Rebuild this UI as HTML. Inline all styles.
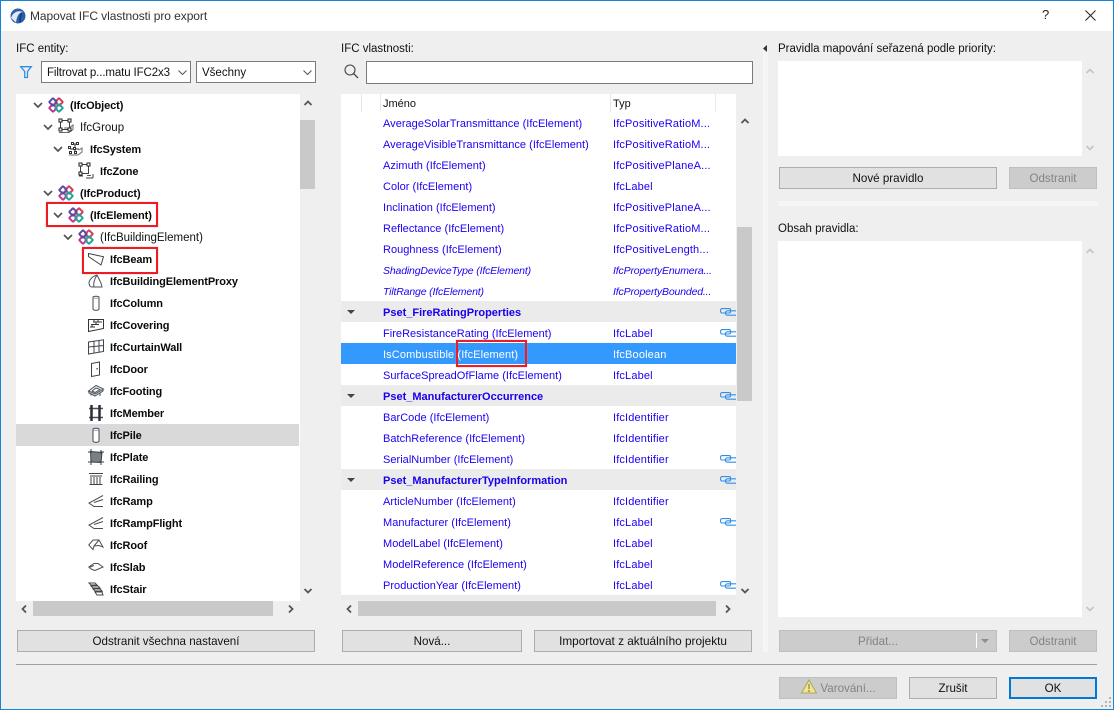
<!DOCTYPE html>
<html><head><meta charset="utf-8"><title>Mapovat IFC vlastnosti pro export</title>
<style>
html,body{margin:0;padding:0}
body{width:1114px;height:710px;overflow:hidden;position:relative;background:#efefef;font:12px/20px "Liberation Sans",sans-serif;color:#111}
div{position:absolute;box-sizing:border-box}
.t{white-space:nowrap;height:20px;margin-top:1px}
.b{font-weight:bold;font-size:11px;color:#0a0a0a;letter-spacing:-.1px}
.r{font-size:11.5px;color:#111}
.l{color:#1c00f4;font-size:11px;white-space:nowrap;height:20px;left:383px;margin-top:1px;letter-spacing:.03px}
.y{color:#1c00f4;font-size:11px;white-space:nowrap;height:20px;left:613px;margin-top:1px;letter-spacing:.15px}
.g{font-weight:bold;font-size:11px;left:383px;color:#1800ee;white-space:nowrap;height:20px;margin-top:1px}
.l.i,.y.i{font-style:italic;font-size:10.5px;letter-spacing:-.16px}
.grp{left:341px;width:395px;height:21px;background:#ebebeb}
.btn{background:#e1e1e1;border:1px solid #adadad;text-align:center;height:22px;line-height:21px;font-size:11.6px;color:#111}
.dis{background:#ccc;border:1px solid #bfbfbf;color:#838383}
.wh{background:#fff}
.th{background:#c9c9c9}
.red{border:2px solid #ee1c25;box-shadow:0 0 1px #f88}
svg{position:absolute;overflow:visible}
</style></head><body>
<svg width="0" height="0" style="position:absolute"><defs>
<symbol id="ifc" viewBox="0 0 16 16" overflow="visible"><g fill="none" stroke-width="2"><rect x="2.250" y="8.250" width="5.500" height="5.500" rx=".8" transform="rotate(45 5 11)" stroke="#c2368f"/><rect x="8.250" y="2.250" width="5.500" height="5.500" rx=".8" transform="rotate(45 11 5)" stroke="#d93a55"/><rect x="2.250" y="2.250" width="5.500" height="5.500" rx=".8" transform="rotate(45 5 5)" stroke="#5a4aa6"/><rect x="8.250" y="8.250" width="5.500" height="5.500" rx=".8" transform="rotate(45 11 11)" stroke="#1fa59a"/></g></symbol>
<symbol id="chev" viewBox="0 0 10 6" overflow="visible"><path d="M1 1l4 4 4-4" fill="none" stroke="#555" stroke-width="1.700"/></symbol>
<symbol id="up" viewBox="0 0 10 6" overflow="visible"><path d="M1.500 5L5 1.500 8.500 5" fill="none" stroke="#555" stroke-width="1.800"/></symbol>
<symbol id="dn" viewBox="0 0 10 6" overflow="visible"><path d="M1.500 1L5 4.500 8.500 1" fill="none" stroke="#555" stroke-width="1.800"/></symbol>
<symbol id="ul" viewBox="0 0 10 6" overflow="visible"><path d="M1.500 5L5 1.500 8.500 5" fill="none" stroke="#c6c6c6" stroke-width="1.800"/></symbol>
<symbol id="dl" viewBox="0 0 10 6" overflow="visible"><path d="M1.500 1L5 4.500 8.500 1" fill="none" stroke="#c6c6c6" stroke-width="1.800"/></symbol>
<symbol id="lf" viewBox="0 0 6 10" overflow="visible"><path d="M5 1.500L1.500 5 5 8.500" fill="none" stroke="#555" stroke-width="1.800"/></symbol>
<symbol id="rt" viewBox="0 0 6 10" overflow="visible"><path d="M1 1.500L4.500 5 1 8.500" fill="none" stroke="#555" stroke-width="1.800"/></symbol>
<symbol id="lnk" viewBox="0 0 16 8" overflow="hidden"><g fill="none" stroke="#2f8fe6" stroke-width="1.100"><rect x=".6" y=".6" width="10" height="4.400" rx="1.500"/><path d="M16 2.800H7.500a1.500 1.500 0 0 0 0 4.400H16"/></g></symbol>
<symbol id="col" viewBox="0 0 16 16" overflow="visible"><path d="M5 2.200c0-1.300 6-1.300 6 0v11.600c0 2-6 2-6 0z" fill="#fff" stroke="#445" stroke-width="1"/><path d="M5 2.500c1 1 5 1 6 0" fill="none" stroke="#889" stroke-width=".8"/></symbol>
<symbol id="ramp" viewBox="0 0 16 16" overflow="visible"><path d="M15 2.500L1 10l5 3.500h9M6 9.500l9-3" fill="none" stroke="#4a5058" stroke-width="1"/></symbol>
</defs></svg>

<!-- window frame & title -->
<div class="wh" style="left:0;top:0;width:1114px;height:31px"></div>
<svg style="left:10px;top:8px" width="16" height="16" viewBox="0 0 16 16"><circle cx="8" cy="8" r="7.500" fill="#2d5fa8"/><path d="M1 10C3 4 8 2 13.500 4 9.500 4 7 7 6 14.500" fill="#dfe8f4"/><path d="M12 5c-1.500 1.500-2 5-1.800 9" stroke="#15397a" stroke-width="1.500" fill="none"/></svg>
<div class="t" style="left:30px;top:5px;color:#333;letter-spacing:-.07px">Mapovat IFC vlastnosti pro export</div>
<div class="t" style="left:1042px;top:4px;font-size:13px;color:#222">?</div>
<svg style="left:1085px;top:10px" width="11" height="11"><path d="M.5.500l10 10M10.500.500l-10 10" stroke="#222" stroke-width="1"/></svg>

<!-- left column -->
<div class="t" style="left:16px;top:38px;font-size:11.5px">IFC entity:</div>
<svg style="left:20px;top:66px" width="12" height="12"><path d="M.7.700h10.600L7.500 5.500v6H4.700v-6z" fill="none" stroke="#2f8fe6" stroke-width="1.300"/></svg>
<div class="wh" style="left:41px;top:61px;width:150px;height:22px;border:1px solid #7a7a7a"></div>
<div class="t" style="left:47px;top:62px;font-size:11.5px;letter-spacing:-.12px">Filtrovat p...matu IFC2x3</div>
<svg style="left:178px;top:70px" width="9" height="6"><path d="M.500.500l4 4 4-4" fill="none" stroke="#555" stroke-width="1"/></svg>
<div class="wh" style="left:196px;top:61px;width:120px;height:22px;border:1px solid #7a7a7a"></div>
<div class="t" style="left:202px;top:62px;font-size:11.5px">Všechny</div>
<svg style="left:303px;top:70px" width="9" height="6"><path d="M.500.500l4 4 4-4" fill="none" stroke="#555" stroke-width="1"/></svg>

<div class="wh" style="left:16px;top:94px;width:284px;height:507px"></div>
<div style="left:16px;top:424px;width:283px;height:22px;background:#d9d9d9"></div>
<div class="th" style="left:300px;top:120px;width:15px;height:69px"></div>
<svg style="left:303px;top:100px" width="10" height="6"><use href="#up"/></svg>
<svg style="left:303px;top:588px" width="10" height="6"><use href="#dn"/></svg>
<div class="th" style="left:33px;top:601px;width:240px;height:15px"></div>
<svg style="left:21px;top:604px" width="6" height="10"><use href="#lf"/></svg>
<svg style="left:288px;top:604px" width="6" height="10"><use href="#rt"/></svg>

<!-- tree chevrons -->
<svg style="left:33px;top:102px" width="10" height="6"><use href="#chev"/></svg>
<svg style="left:43px;top:124px" width="10" height="6"><use href="#chev"/></svg>
<svg style="left:53px;top:146px" width="10" height="6"><use href="#chev"/></svg>
<svg style="left:43px;top:190px" width="10" height="6"><use href="#chev"/></svg>
<svg style="left:53px;top:212px" width="10" height="6"><use href="#chev"/></svg>
<svg style="left:63px;top:234px" width="10" height="6"><use href="#chev"/></svg>
<!-- tree icons -->
<svg style="left:48px;top:97px" width="16" height="16"><use href="#ifc"/></svg>
<svg style="left:58px;top:119px" width="16" height="16" viewBox="0 0 16 16"><g fill="none" stroke="#3a4048"><path d="M2.500 1.500h9v9h-9z"/><path d="M1 13.500h10l4-3V6l-4 3H6" stroke="#667"/></g><g fill="#fff" stroke="#222"><rect x="1" y="0" width="3" height="3"/><rect x="10" y="0" width="3" height="3"/><rect x="1" y="9" width="3" height="3"/><rect x="10" y="9" width="3" height="3"/></g></svg>
<svg style="left:68px;top:141px" width="16" height="16" viewBox="0 0 16 16"><g fill="none" stroke="#333"><path d="M4 3h6M7 3v8M2 8h9"/><path d="M1 14h9l4-3V7l-3 2" stroke="#667"/></g><g fill="#fff" stroke="#333"><rect x="3.500" y="1.500" width="2" height="2"/><rect x="8.500" y="1.500" width="2" height="2"/><rect x=".5" y="5.500" width="2" height="2"/><rect x="5.500" y="6.500" width="2" height="2"/><rect x="1.500" y="10.500" width="2" height="2"/><rect x="6.500" y="10.500" width="2" height="2"/></g></svg>
<svg style="left:78px;top:163px" width="16" height="16" viewBox="0 0 16 16"><g fill="none" stroke="#3a4048"><path d="M2.500 1.500h8v9h-8z"/><path d="M1 13h4M8 15h7M15 15v-4"/></g><path d="M9 12h4v1H9z" fill="#555"/><g fill="#fff" stroke="#222"><rect x="1" y="0" width="3" height="3"/><rect x="9" y="0" width="3" height="3"/><rect x="1" y="9" width="3" height="3"/></g></svg>
<svg style="left:58px;top:185px" width="16" height="16"><use href="#ifc"/></svg>
<svg style="left:68px;top:207px" width="16" height="16"><use href="#ifc"/></svg>
<svg style="left:78px;top:229px" width="16" height="16"><use href="#ifc"/></svg>
<svg style="left:88px;top:251px" width="16" height="16" viewBox="0 0 16 16"><path d="M.5 2.500L15.500 5.700 13 14 .5 5.500zM13 14l2.500-8.300" fill="none" stroke="#3f454c"/></svg>
<svg style="left:88px;top:273px" width="16" height="16" viewBox="0 0 16 16"><path d="M1 9C2 6 5 3 9 2L13 10 14 14H4C2 14 1 12 1 9zM9 2c-2 3-4 8-3 12" fill="none" stroke="#4a5058"/></svg>
<svg style="left:88px;top:295px" width="16" height="16"><use href="#col"/></svg>
<svg style="left:88px;top:317px" width="16" height="16" viewBox="0 0 16 16"><path d="M.500 2.500h15v9L.500 14.500z" fill="#fff" stroke="#333"/><path d="M5 5h9M3 7.500h8M2 10h5M6 2.500V5M10 2.500V5M8 5v2.500M4 7.500V10" stroke="#333" fill="none"/></svg>
<svg style="left:88px;top:339px" width="16" height="16" viewBox="0 0 16 16"><path d="M.500 3L15.500.800v11.700L.500 15zM.500 8L15.500 6.500M6 2.200v12M11 1.500v11.500" fill="none" stroke="#3f454c"/></svg>
<svg style="left:88px;top:361px" width="16" height="16" viewBox="0 0 16 16"><path d="M3.500 2.500l8-1.500v13l-8 1.500z" fill="#fff" stroke="#3f454c"/><rect x="8.500" y="7" width="1.200" height="1.500" fill="#333"/></svg>
<svg style="left:88px;top:383px" width="16" height="16" viewBox="0 0 16 16"><path d="M.500 8L8 2.500 15.500 6 7 11zM4 8l4-3 4 1.500-5 3zM.500 8L1 10l6 3 8-5V6M3 10.500v2M12 10v3" fill="none" stroke="#4a5058"/></svg>
<svg style="left:88px;top:405px" width="16" height="16" viewBox="0 0 16 16"><path d="M1 3.500h14M1 12.500h14" stroke="#4a5058" stroke-width="1.500"/><path d="M3.500 0v16M11.500 0v16" stroke="#2a2f35" stroke-width="2.500"/></svg>
<svg style="left:88px;top:427px" width="16" height="16"><use href="#col"/></svg>
<svg style="left:88px;top:449px" width="16" height="16" viewBox="0 0 16 16"><path d="M2.500 2.500L14 3.500 13 13.500 3 13z" fill="#7b7f85" stroke="#3a3f45"/><path d="M3 0v4M0 3h4M13 1v4M12 3h4M3 11v5M0 13h5M13 11v5M11 13h5" stroke="#3a3f45"/></svg>
<svg style="left:88px;top:471px" width="16" height="16" viewBox="0 0 16 16"><path d="M1 2.500h14M2 5h12M3 6v7M6 6v7M9 6v7M12 6v7M1.500 13.500h13" fill="none" stroke="#3f454c"/></svg>
<svg style="left:88px;top:493px" width="16" height="16"><use href="#ramp"/></svg>
<svg style="left:88px;top:515px" width="16" height="16"><use href="#ramp"/></svg>
<svg style="left:88px;top:537px" width="16" height="16" viewBox="0 0 16 16"><path d="M.800 8L5 3h6l4 7-4-1.500L6 9 5 12.500zM6 9l5-6" fill="none" stroke="#4a5058"/></svg>
<svg style="left:88px;top:559px" width="16" height="16" viewBox="0 0 16 16"><path d="M.800 8L6 4.500h4L15 8 7 11.500 4 10.500.800 8zM2 8l4-1.500" fill="none" stroke="#4a5058"/></svg>
<svg style="left:88px;top:581px" width="16" height="16" viewBox="0 0 16 16"><path d="M1 2h6l2 2H3zM3 5h7l2 2H5zM5 8h7l2 2H7zM7 11h7l1 3H9z" fill="#fff" stroke="#444"/></svg>
<!-- tree text -->
<div class="t b" style="left:70px;top:95px">(IfcObject)</div>
<div class="t r" style="left:80px;top:117px">IfcGroup</div>
<div class="t b" style="left:90px;top:139px">IfcSystem</div>
<div class="t b" style="left:100px;top:161px">IfcZone</div>
<div class="t b" style="left:80px;top:183px">(IfcProduct)</div>
<div class="t b" style="left:90px;top:205px">(IfcElement)</div>
<div class="t r" style="left:100px;top:227px">(IfcBuildingElement)</div>
<div class="t b" style="left:110px;top:249px">IfcBeam</div>
<div class="t b" style="left:110px;top:271px">IfcBuildingElementProxy</div>
<div class="t b" style="left:110px;top:293px">IfcColumn</div>
<div class="t b" style="left:110px;top:315px">IfcCovering</div>
<div class="t b" style="left:110px;top:337px">IfcCurtainWall</div>
<div class="t b" style="left:110px;top:359px">IfcDoor</div>
<div class="t b" style="left:110px;top:381px">IfcFooting</div>
<div class="t b" style="left:110px;top:403px">IfcMember</div>
<div class="t b" style="left:110px;top:425px">IfcPile</div>
<div class="t b" style="left:110px;top:447px">IfcPlate</div>
<div class="t b" style="left:110px;top:469px">IfcRailing</div>
<div class="t b" style="left:110px;top:491px">IfcRamp</div>
<div class="t b" style="left:110px;top:513px">IfcRampFlight</div>
<div class="t b" style="left:110px;top:535px">IfcRoof</div>
<div class="t b" style="left:110px;top:557px">IfcSlab</div>
<div class="t b" style="left:110px;top:579px">IfcStair</div>
<div class="red" style="left:46px;top:202px;width:112px;height:25px"></div>
<div class="red" style="left:82px;top:247px;width:76px;height:27px"></div>
<div class="btn" style="left:17px;top:630px;width:298px">Odstranit všechna nastavení</div>

<!-- middle column -->
<div class="t" style="left:341px;top:38px;font-size:11.5px">IFC vlastnosti:</div>
<svg style="left:344px;top:64px" width="15" height="15"><circle cx="6" cy="6" r="5" fill="none" stroke="#444" stroke-width="1.100"/><path d="M9.700 9.700l4.300 4.300" stroke="#444" stroke-width="1.300"/></svg>
<div class="wh" style="left:366px;top:61px;width:387px;height:23px;border:1px solid #7a7a7a"></div>
<div class="wh" style="left:341px;top:94px;width:395px;height:506px"></div>
<div style="left:361px;top:94px;width:1px;height:18px;background:#e8e8e8"></div>
<div style="left:380px;top:94px;width:1px;height:18px;background:#e8e8e8"></div>
<div style="left:610px;top:94px;width:1px;height:18px;background:#e8e8e8"></div>
<div style="left:715px;top:94px;width:1px;height:18px;background:#e8e8e8"></div>
<div class="t" style="left:383px;top:93px;font-size:11px">Jméno</div>
<div class="t" style="left:613px;top:93px;font-size:11px">Typ</div>
<div class="grp" style="top:301px"></div>
<div class="grp" style="top:385px"></div>
<div class="grp" style="top:469px"></div>
<div class="grp" style="top:595px;height:5px"></div>
<div style="left:341px;top:343px;width:395px;height:21px;background:#3399ff"></div>
<svg style="left:347px;top:310px" width="8" height="4"><path d="M0 0h8L4 4z" fill="#444"/></svg>
<svg style="left:347px;top:394px" width="8" height="4"><path d="M0 0h8L4 4z" fill="#444"/></svg>
<svg style="left:347px;top:478px" width="8" height="4"><path d="M0 0h8L4 4z" fill="#444"/></svg>

<div class="l" style="top:113px">AverageSolarTransmittance (IfcElement)</div><div class="y" style="top:113px">IfcPositiveRatioM...</div>
<div class="l" style="top:134px">AverageVisibleTransmittance (IfcElement)</div><div class="y" style="top:134px">IfcPositiveRatioM...</div>
<div class="l" style="top:155px">Azimuth (IfcElement)</div><div class="y" style="top:155px">IfcPositivePlaneA...</div>
<div class="l" style="top:176px">Color (IfcElement)</div><div class="y" style="top:176px">IfcLabel</div>
<div class="l" style="top:197px">Inclination (IfcElement)</div><div class="y" style="top:197px">IfcPositivePlaneA...</div>
<div class="l" style="top:218px">Reflectance (IfcElement)</div><div class="y" style="top:218px">IfcPositiveRatioM...</div>
<div class="l" style="top:239px">Roughness (IfcElement)</div><div class="y" style="top:239px">IfcPositiveLength...</div>
<div class="l i" style="top:260px">ShadingDeviceType (IfcElement)</div><div class="y i" style="top:260px">IfcPropertyEnumera...</div>
<div class="l i" style="top:281px">TiltRange (IfcElement)</div><div class="y i" style="top:281px">IfcPropertyBounded...</div>
<div class="g" style="top:302px">Pset_FireRatingProperties</div>
<div class="l" style="top:323px">FireResistanceRating (IfcElement)</div><div class="y" style="top:323px">IfcLabel</div>
<div class="l" style="top:344px;color:#fff;letter-spacing:.12px">IsCombustible (IfcElement)</div><div class="y" style="top:344px;color:#fff">IfcBoolean</div>
<div class="l" style="top:365px">SurfaceSpreadOfFlame (IfcElement)</div><div class="y" style="top:365px">IfcLabel</div>
<div class="g" style="top:386px">Pset_ManufacturerOccurrence</div>
<div class="l" style="top:407px">BarCode (IfcElement)</div><div class="y" style="top:407px">IfcIdentifier</div>
<div class="l" style="top:428px">BatchReference (IfcElement)</div><div class="y" style="top:428px">IfcIdentifier</div>
<div class="l" style="top:449px">SerialNumber (IfcElement)</div><div class="y" style="top:449px">IfcIdentifier</div>
<div class="g" style="top:470px">Pset_ManufacturerTypeInformation</div>
<div class="l" style="top:491px">ArticleNumber (IfcElement)</div><div class="y" style="top:491px">IfcIdentifier</div>
<div class="l" style="top:512px">Manufacturer (IfcElement)</div><div class="y" style="top:512px">IfcLabel</div>
<div class="l" style="top:533px">ModelLabel (IfcElement)</div><div class="y" style="top:533px">IfcLabel</div>
<div class="l" style="top:554px">ModelReference (IfcElement)</div><div class="y" style="top:554px">IfcLabel</div>
<div class="l" style="top:575px">ProductionYear (IfcElement)</div><div class="y" style="top:575px">IfcLabel</div>
<svg style="left:720px;top:308px" width="16" height="8"><use href="#lnk"/></svg>
<svg style="left:720px;top:329px" width="16" height="8"><use href="#lnk"/></svg>
<svg style="left:720px;top:392px" width="16" height="8"><use href="#lnk"/></svg>
<svg style="left:720px;top:455px" width="16" height="8"><use href="#lnk"/></svg>
<svg style="left:720px;top:476px" width="16" height="8"><use href="#lnk"/></svg>
<svg style="left:720px;top:518px" width="16" height="8"><use href="#lnk"/></svg>
<svg style="left:720px;top:581px" width="16" height="8"><use href="#lnk"/></svg>
<div class="red" style="left:456px;top:340px;width:71px;height:27px"></div>

<div class="th" style="left:737px;top:227px;width:15px;height:174px"></div>
<svg style="left:740px;top:118px" width="10" height="6"><use href="#up"/></svg>
<svg style="left:740px;top:588px" width="10" height="6"><use href="#dn"/></svg>
<div class="th" style="left:358px;top:601px;width:358px;height:15px"></div>
<svg style="left:346px;top:604px" width="6" height="10"><use href="#lf"/></svg>
<svg style="left:725px;top:604px" width="6" height="10"><use href="#rt"/></svg>
<div class="btn" style="left:342px;top:630px;width:180px">Nová...</div>
<div class="btn" style="left:534px;top:630px;width:218px;font-size:11.8px">Importovat z aktuálního projektu</div>

<!-- splitter -->
<div style="left:763px;top:50px;width:5px;height:602px;background:#f5f5f5"></div>
<svg style="left:763px;top:45px" width="4" height="7"><path d="M4 0v7L0 3.500z" fill="#333"/></svg>
<div style="left:778px;top:201px;width:320px;height:5px;background:#f5f5f5"></div>

<!-- right column -->
<div class="t" style="left:778px;top:38px;font-size:11.5px">Pravidla mapování seřazená podle priority:</div>
<div class="wh" style="left:778px;top:61px;width:304px;height:95px"></div>
<svg style="left:1085px;top:68px" width="10" height="6"><use href="#ul"/></svg>
<svg style="left:1085px;top:145px" width="10" height="6"><use href="#dl"/></svg>
<div class="btn" style="left:779px;top:167px;width:218px">Nové pravidlo</div>
<div class="btn dis" style="left:1009px;top:167px;width:88px">Odstranit</div>
<div class="t" style="left:778px;top:218px;font-size:11.5px">Obsah pravidla:</div>
<div class="wh" style="left:778px;top:241px;width:304px;height:376px"></div>
<svg style="left:1085px;top:248px" width="10" height="6"><use href="#ul"/></svg>
<svg style="left:1085px;top:606px" width="10" height="6"><use href="#dl"/></svg>
<div class="btn dis" style="left:779px;top:630px;width:218px;padding-right:20px">Přidat...</div>
<div style="left:976px;top:633px;width:1px;height:15px;background:#fff"></div>
<svg style="left:981px;top:639px" width="8" height="4"><path d="M0 0h8L4 4z" fill="#8c8c8c"/></svg>
<div class="btn dis" style="left:1009px;top:630px;width:88px">Odstranit</div>

<div style="left:16px;top:664px;width:1081px;height:1px;background:#a0a0a0"></div>
<div class="btn dis" style="left:779px;top:677px;width:118px;padding-left:20px">Varování...</div>
<svg style="left:801px;top:679px" width="16" height="15"><path d="M8 1L15.500 14H.500z" fill="#f3e58c" stroke="#a6a66a"/><path d="M8 5v5M8 11v2" stroke="#8a8a55" stroke-width="1.300"/></svg>
<div class="btn" style="left:909px;top:677px;width:88px">Zrušit</div>
<div class="btn" style="left:1009px;top:677px;width:88px;border:2px solid #0078d7;line-height:19px">OK</div>
<svg style="left:1101px;top:697px" width="11" height="11"><g fill="#b5b5b5"><rect x="8" y="0" width="2" height="2"/><rect x="4" y="4" width="2" height="2"/><rect x="8" y="4" width="2" height="2"/><rect x="0" y="8" width="2" height="2"/><rect x="4" y="8" width="2" height="2"/><rect x="8" y="8" width="2" height="2"/></g></svg>

<div style="left:0;top:0;width:1114px;height:710px;border:1px solid #1783d8"></div>
</body></html>
